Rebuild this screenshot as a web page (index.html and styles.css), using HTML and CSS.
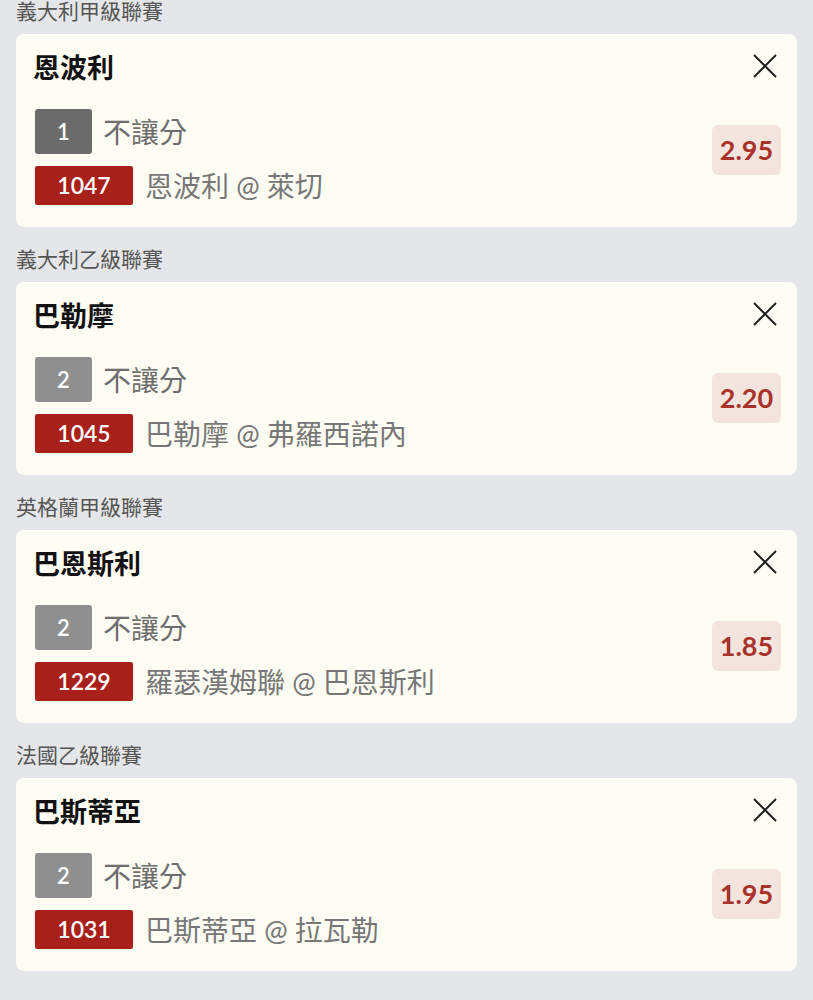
FILE: index.html
```html
<!DOCTYPE html>
<html>
<head>
  <meta charset="utf-8">
  <link rel="stylesheet" href="styles.css">
</head>
<body>
  <div class="slip-list">

    <section class="league">
      <div class="league-name">義大利甲級聯賽</div>
      <div class="bet-card">
        <div class="team">恩波利</div>
        <button class="remove-btn" aria-label="移除">
          <svg viewBox="0 0 24 24" width="24" height="24"><path d="M1 1 L23 23 M23 1 L1 23"/></svg>
        </button>
        <div class="bet-body">
          <div class="bet-lines">
            <div class="bet-line"><span class="pick pick-dark">1</span><span class="market">不讓分</span></div>
            <div class="bet-line"><span class="match-no">1047</span><span class="match">恩波利 @ 萊切</span></div>
          </div>
          <div class="odds">2.95</div>
        </div>
      </div>
    </section>

    <section class="league">
      <div class="league-name">義大利乙級聯賽</div>
      <div class="bet-card">
        <div class="team">巴勒摩</div>
        <button class="remove-btn" aria-label="移除">
          <svg viewBox="0 0 24 24" width="24" height="24"><path d="M1 1 L23 23 M23 1 L1 23"/></svg>
        </button>
        <div class="bet-body">
          <div class="bet-lines">
            <div class="bet-line"><span class="pick">2</span><span class="market">不讓分</span></div>
            <div class="bet-line"><span class="match-no">1045</span><span class="match">巴勒摩 @ 弗羅西諾內</span></div>
          </div>
          <div class="odds">2.20</div>
        </div>
      </div>
    </section>

    <section class="league">
      <div class="league-name">英格蘭甲級聯賽</div>
      <div class="bet-card">
        <div class="team">巴恩斯利</div>
        <button class="remove-btn" aria-label="移除">
          <svg viewBox="0 0 24 24" width="24" height="24"><path d="M1 1 L23 23 M23 1 L1 23"/></svg>
        </button>
        <div class="bet-body">
          <div class="bet-lines">
            <div class="bet-line"><span class="pick">2</span><span class="market">不讓分</span></div>
            <div class="bet-line"><span class="match-no">1229</span><span class="match">羅瑟漢姆聯 @ 巴恩斯利</span></div>
          </div>
          <div class="odds">1.85</div>
        </div>
      </div>
    </section>

    <section class="league">
      <div class="league-name">法國乙級聯賽</div>
      <div class="bet-card">
        <div class="team">巴斯蒂亞</div>
        <button class="remove-btn" aria-label="移除">
          <svg viewBox="0 0 24 24" width="24" height="24"><path d="M1 1 L23 23 M23 1 L1 23"/></svg>
        </button>
        <div class="bet-body">
          <div class="bet-lines">
            <div class="bet-line"><span class="pick">2</span><span class="market">不讓分</span></div>
            <div class="bet-line"><span class="match-no">1031</span><span class="match">巴斯蒂亞 @ 拉瓦勒</span></div>
          </div>
          <div class="odds">1.95</div>
        </div>
      </div>
    </section>

  </div>
</body>
</html>
```

FILE: styles.css
```css
/* Variables */
:root {
    --page-bg: #e5e6e9;
    --card-bg: #fefdf4;
    --red: #a8201a;
    --odds-red: #a8322a;
    --odds-bg: #f3e4de;

    --font-family: Lato, "Noto Sans CJK TC", "Noto Sans", sans-serif;
}

body {
  margin: 0;
  background: var(--page-bg);
  font-family: var(--font-family);
}

.slip-list {
  margin-top: -21px;
  padding: 0 16px;
}

.league-name {
  padding-top: 17px;
  margin-bottom: 8px;
  line-height: 30px;
  font-size: 21px;
  color: #555;
}

.bet-card {
  position: relative;
  background: var(--card-bg);
  border-radius: 8px;
  padding: 14px 16px 22px 19px;
}

.team {
  height: 40px;
  line-height: 40px;
  font-size: 27px;
  font-weight: bold;
  color: #111;
  margin-left: -2px;
  margin-bottom: 21px;
}

.remove-btn {
  position: absolute;
  top: 20px;
  right: 20px;
  width: 24px;
  height: 24px;
  padding: 0;
  border: none;
  background: none;
  cursor: pointer;
}

.remove-btn svg {
  display: block;
  stroke: #222;
  stroke-width: 2;
  fill: none;
}

.bet-body {
  display: flex;
  justify-content: space-between;
  align-items: flex-start;
}

.bet-lines {
  display: flex;
  flex-direction: column;
  gap: 12px;
}

.bet-line {
  display: flex;
  align-items: center;
  line-height: 1;
  font-size: 28px;
  color: #6d6d6d;
}

.pick {
  width: 57px;
  height: 45px;
  line-height: 45px;
  border-radius: 3px;
  background: #8f8f8f;
  color: white;
  font-size: 22px;
  font-weight: 600;
  text-align: center;
  margin-right: 11px;
}

.pick-dark {
  background: #6b6b6b;
}

.match-no {
  width: 98px;
  height: 39px;
  line-height: 39px;
  border-radius: 2px;
  background: var(--red);
  color: white;
  font-size: 23px;
  font-weight: 600;
  text-align: center;
  margin-right: 12px;
}

.match {
  color: #777;
}

.odds {
  margin-top: 16px;
  width: 69px;
  height: 50px;
  line-height: 50px;
  border-radius: 6px;
  background: var(--odds-bg);
  color: var(--odds-red);
  font-size: 27px;
  font-weight: bold;
  text-align: center;
}
```
